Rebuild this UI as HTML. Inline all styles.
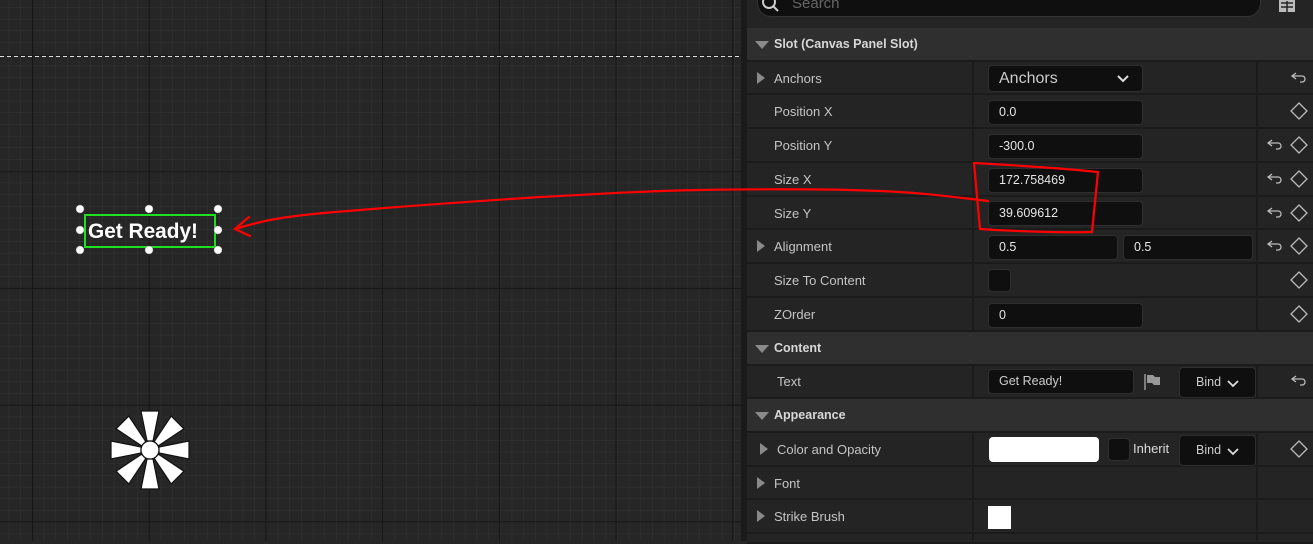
<!DOCTYPE html>
<html><head><style>
body{margin:0;width:1313px;height:541px;overflow:hidden;background:#262626;font-family:"Liberation Sans",sans-serif;position:relative}
.p{position:absolute}
.row{position:absolute;left:747px;width:566px;background:#242424;border-bottom:2px solid #1b1b1b;box-sizing:border-box}
.hdr{position:absolute;left:747px;width:566px;background:#2f2f2f;border-bottom:2px solid #1b1b1b;box-sizing:border-box;color:#d8d8d8;font-weight:bold;font-size:12.5px}
.lbl{position:absolute;left:27px;color:#c4c4c4;font-size:13px}
.tri{position:absolute;left:10px;width:0;height:0;border-top:6px solid transparent;border-bottom:6px solid transparent;border-left:8px solid #8a8a8a}
.dn{position:absolute;left:8px;width:0;height:0;border-left:7px solid transparent;border-right:7px solid transparent;border-top:8px solid #8a8a8a}
.box{position:absolute;background:#0f0f0f;border:1px solid #2e2e2e;border-radius:4px;color:#e6e6e6;font-size:12.5px;box-sizing:border-box;padding-left:10px}
</style></head><body>
<svg class="p" style="left:0;top:0" width="741" height="541">
<defs>
<pattern id="mi" x="32" y="54" width="11.7" height="11.7" patternUnits="userSpaceOnUse"><path d="M0 0H11.7M0 0V11.7" stroke="#333" stroke-width="1" fill="none"/></pattern>
<pattern id="ma" x="32" y="54.5" width="116.7" height="116.7" patternUnits="userSpaceOnUse"><path d="M0.5 0V116.7M0 0.5H116.7" stroke="#161616" stroke-width="1.3" fill="none"/></pattern>
</defs>
<rect width="741" height="541" fill="#262626"/>
<rect width="741" height="541" fill="url(#mi)"/>
<rect width="741" height="541" fill="url(#ma)"/>
<line x1="0" y1="56.5" x2="741" y2="56.5" stroke="#ddd" stroke-dasharray="4,3"/>
<rect x="85" y="215" width="130" height="32" fill="none" stroke="#1fe01f" stroke-width="2"/>
<text x="88" y="238" fill="#fff" font-size="21" font-weight="bold" font-family="Liberation Sans" textLength="110" lengthAdjust="spacingAndGlyphs">Get Ready!</text>
<g fill="#fff" stroke="#888" stroke-width=".5">
<circle cx="80" cy="209" r="4"/><circle cx="149" cy="209" r="4"/><circle cx="218" cy="209" r="4"/>
<circle cx="80" cy="230" r="4"/><circle cx="218" cy="230" r="4"/>
<circle cx="80" cy="250" r="4"/><circle cx="149" cy="250" r="4"/><circle cx="218" cy="250" r="4"/>
</g>
<g transform="translate(150,450)" fill="#fff" stroke="#111" stroke-width="1.2">
<g id="pt"><path d="M-3 -9 L-9 -39 L9 -39 L3 -9Z"/></g>
<use href="#pt" transform="rotate(45)"/><use href="#pt" transform="rotate(90)"/><use href="#pt" transform="rotate(135)"/>
<use href="#pt" transform="rotate(180)"/><use href="#pt" transform="rotate(225)"/><use href="#pt" transform="rotate(270)"/><use href="#pt" transform="rotate(315)"/>
<circle r="9"/>
</g>
</svg>
<div class="p" style="left:741px;top:0;width:6px;height:541px;background:#1a1a1a"></div>
<div class="p" style="left:747px;top:0;width:566px;height:28px;background:#242424"></div>
<div class="p" style="left:757px;top:-14px;width:504px;height:31px;background:#0f0f0f;border:1px solid #333;border-radius:14px;box-sizing:border-box"></div>
<svg class="p" style="left:760px;top:-6px" width="22" height="22"><circle cx="9" cy="8" r="6" stroke="#ccc" stroke-width="2" fill="none"/><path d="M13 12L18 17" stroke="#ccc" stroke-width="2"/></svg>
<div class="p" style="left:792px;top:-5px;color:#666;font-size:15px">Search</div>
<svg class="p" style="left:1278px;top:0" width="20" height="14"><rect x="1" y="0" width="16" height="12" fill="#bbb"/><path d="M3 3H15M3 7H15M9 1V12" stroke="#242424" stroke-width="1.5"/></svg>
<div class="hdr" style="top:28px;height:34px"><div class="dn" style="top:13px"></div><div class="p" style="left:27px;top:9px">Slot (Canvas Panel Slot)</div></div>
<div class="row" style="top:62px;height:33px"><div class="tri" style="top:10px"></div><div class="lbl" style="top:9px">Anchors</div></div>
<div class="row" style="top:95px;height:34px"><div class="lbl" style="top:9px">Position X</div></div>
<div class="row" style="top:129px;height:34px"><div class="lbl" style="top:9px">Position Y</div></div>
<div class="row" style="top:163px;height:34px"><div class="lbl" style="top:9px">Size X</div></div>
<div class="row" style="top:197px;height:33px"><div class="lbl" style="top:9px">Size Y</div></div>
<div class="row" style="top:230px;height:34px"><div class="tri" style="top:10px"></div><div class="lbl" style="top:9px">Alignment</div></div>
<div class="row" style="top:264px;height:34px"><div class="lbl" style="top:9px">Size To Content</div></div>
<div class="row" style="top:298px;height:34px"><div class="lbl" style="top:9px">ZOrder</div></div>
<div class="hdr" style="top:332px;height:34px"><div class="dn" style="top:13px"></div><div class="p" style="left:27px;top:9px">Content</div></div>
<div class="row" style="top:366px;height:33px"><div class="lbl" style="top:8px;left:30px">Text</div></div>
<div class="hdr" style="top:399px;height:34px"><div class="dn" style="top:13px"></div><div class="p" style="left:27px;top:9px">Appearance</div></div>
<div class="row" style="top:433px;height:34px"><div class="tri" style="top:10px;left:13px"></div><div class="lbl" style="top:9px;left:30px">Color and Opacity</div></div>
<div class="row" style="top:467px;height:33px"><div class="tri" style="top:10px"></div><div class="lbl" style="top:9px">Font</div></div>
<div class="row" style="top:500px;height:34px"><div class="tri" style="top:10px"></div><div class="lbl" style="top:9px">Strike Brush</div></div>
<div class="row" style="top:534px;height:10px"></div>
<div class="p" style="left:972px;top:62px;width:2px;height:270px;background:#1b1b1b"></div>
<div class="p" style="left:1256px;top:62px;width:2px;height:270px;background:#1b1b1b"></div>
<div class="p" style="left:972px;top:366px;width:2px;height:33px;background:#1b1b1b"></div>
<div class="p" style="left:1256px;top:366px;width:2px;height:33px;background:#1b1b1b"></div>
<div class="p" style="left:972px;top:433px;width:2px;height:108px;background:#1b1b1b"></div>
<div class="p" style="left:1256px;top:433px;width:2px;height:108px;background:#1b1b1b"></div>

<div class="box" style="left:988px;top:65px;width:155px;height:27px;font-size:16px;line-height:25px;color:#ccc">Anchors<svg class="p" style="left:127px;top:8px" width="14" height="10"><path d="M2 2L7 7L12 2" stroke="#ddd" stroke-width="2" fill="none"/></svg></div>
<div class="box" style="left:988px;top:100px;width:155px;height:25px;line-height:23px">0.0</div>
<div class="box" style="left:988px;top:134px;width:155px;height:25px;line-height:23px">-300.0</div>
<div class="box" style="left:988px;top:168px;width:155px;height:25px;line-height:23px">172.758469</div>
<div class="box" style="left:988px;top:201px;width:155px;height:25px;line-height:23px">39.609612</div>
<div class="box" style="left:988px;top:235px;width:130px;height:25px;line-height:23px">0.5</div>
<div class="box" style="left:1123px;top:235px;width:130px;height:25px;line-height:23px">0.5</div>
<div class="box" style="left:988px;top:269px;width:23px;height:23px;padding:0"></div>
<div class="box" style="left:988px;top:303px;width:155px;height:25px;line-height:23px">0</div>
<div class="box" style="left:988px;top:369px;width:146px;height:25px;line-height:22px;color:#ccc">Get Ready!</div>
<svg class="p" style="left:1143px;top:372px" width="20" height="20"><path d="M2 2V18" stroke="#999" stroke-width="1.5"/><path d="M4 3H10L12 5H17V13H11L9 11H4Z" fill="#999"/></svg>
<div class="box" style="left:1179px;top:367px;width:77px;height:31px;line-height:29px;padding-left:16px;color:#ccc">Bind<svg class="p" style="left:46px;top:11px" width="14" height="10"><path d="M2 2L7 7L12 2" stroke="#ddd" stroke-width="1.8" fill="none"/></svg></div>
<div class="p" style="left:989px;top:437px;width:110px;height:25px;background:#fff;border-radius:4px"></div>
<div class="box" style="left:1108px;top:438px;width:22px;height:23px;padding:0"></div>
<div class="p" style="left:1133px;top:441px;color:#ddd;font-size:13px">Inherit</div>
<div class="box" style="left:1179px;top:435px;width:77px;height:31px;line-height:29px;padding-left:16px;color:#ccc">Bind<svg class="p" style="left:46px;top:11px" width="14" height="10"><path d="M2 2L7 7L12 2" stroke="#ddd" stroke-width="1.8" fill="none"/></svg></div>
<div class="p" style="left:988px;top:506px;width:23px;height:23px;background:#fff"></div>

<svg class="p" style="left:1256px;top:0" width="57" height="541" fill="none" stroke="#bbb" stroke-width="1.3">
<defs><path id="rv" d="M4 -3L0 0L4 3M0 0H10C14 0 14 6 10 6H8"/><path id="dm" d="M0 -8L8 0L0 8L-8 0Z"/></defs>
<use href="#rv" x="36" y="76"/>
<use href="#dm" x="43" y="111"/>
<use href="#rv" x="12" y="143"/><use href="#dm" x="43" y="145"/>
<use href="#rv" x="12" y="177"/><use href="#dm" x="43" y="179"/>
<use href="#rv" x="12" y="211"/><use href="#dm" x="43" y="213"/>
<use href="#rv" x="12" y="244"/><use href="#dm" x="43" y="246"/>
<use href="#dm" x="43" y="280"/>
<use href="#dm" x="43" y="314"/>
<use href="#rv" x="36" y="379"/>
<use href="#dm" x="43" y="449"/>
</svg>

<svg class="p" style="left:0;top:0" width="1313" height="541" fill="none" stroke="#f00" stroke-width="2.2" stroke-linecap="round">
<path d="M988 201C960 198 930 193 880 191C830 189 760 189 700 190C640 191 600 194 540 197C480 201 420 205 360 210C320 213 290 216 270 220C255 223 245 226 235 229"/>
<path d="M249 217L235 229L250 236"/>
<path d="M974 163C1010 165 1060 168 1098 172C1096 192 1094 212 1092 232C1060 233 1010 231 980 229C978 207 976 185 974 163"/>
</svg>
</body></html>
